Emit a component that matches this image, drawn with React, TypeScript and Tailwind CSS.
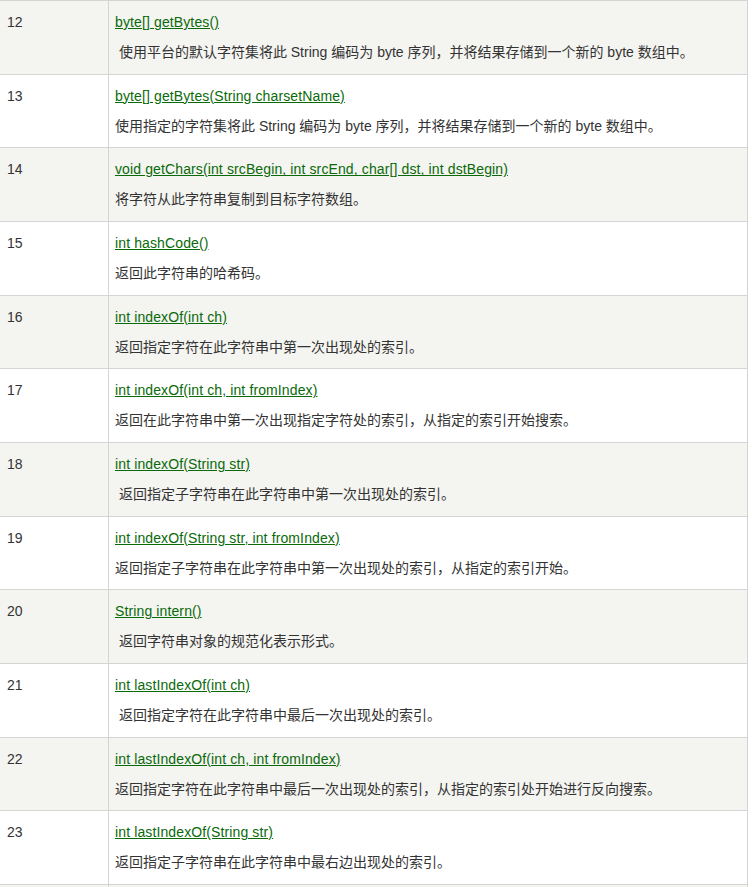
import React from "react";

type Row = { n: number; sig: string; desc: string };

const rows: Row[] = [
  { n: 12, sig: "byte[] getBytes()", desc: "\u00a0使用平台的默认字符集将此 String 编码为 byte 序列，并将结果存储到一个新的 byte 数组中。" },
  { n: 13, sig: "byte[] getBytes(String charsetName)", desc: "使用指定的字符集将此 String 编码为 byte 序列，并将结果存储到一个新的 byte 数组中。" },
  { n: 14, sig: "void getChars(int srcBegin, int srcEnd, char[] dst, int dstBegin)", desc: "将字符从此字符串复制到目标字符数组。" },
  { n: 15, sig: "int hashCode()", desc: "返回此字符串的哈希码。" },
  { n: 16, sig: "int indexOf(int ch)", desc: "返回指定字符在此字符串中第一次出现处的索引。" },
  { n: 17, sig: "int indexOf(int ch, int fromIndex)", desc: "返回在此字符串中第一次出现指定字符处的索引，从指定的索引开始搜索。" },
  { n: 18, sig: "int indexOf(String str)", desc: "\u00a0返回指定子字符串在此字符串中第一次出现处的索引。" },
  { n: 19, sig: "int indexOf(String str, int fromIndex)", desc: "返回指定子字符串在此字符串中第一次出现处的索引，从指定的索引开始。" },
  { n: 20, sig: "String intern()", desc: "\u00a0返回字符串对象的规范化表示形式。" },
  { n: 21, sig: "int lastIndexOf(int ch)", desc: "\u00a0返回指定字符在此字符串中最后一次出现处的索引。" },
  { n: 22, sig: "int lastIndexOf(int ch, int fromIndex)", desc: "返回指定字符在此字符串中最后一次出现处的索引，从指定的索引处开始进行反向搜索。" },
  { n: 23, sig: "int lastIndexOf(String str)", desc: "返回指定子字符串在此字符串中最右边出现处的索引。" },
];

export default function App() {
  return (
    <div
      className="w-[752px] h-[887px] overflow-hidden bg-white text-[14px] text-[#333333]"
      style={{ fontFamily: '"Liberation Sans", Arial, "Noto Sans CJK SC", sans-serif' }}
    >
      <div className="w-[748px] border-t border-r border-[#d4d4d4]">
        {rows.map((r, i) => (
          <div
            key={r.n}
            className={`flex h-[73.67px] border-b border-[#d4d4d4] ${i % 2 === 0 ? "bg-[#f4f4f1]" : "bg-white"}`}
          >
            <div className="w-[109px] shrink-0 border-r border-[#d4d4d4] pl-[7px] pt-[11px] leading-[21px]">
              {r.n}
            </div>
            <div className="flex-1 pl-[6px] pt-[11px]">
              <div className="leading-[21px]">
                <a href="#" className="text-[#0a6a0a] underline tracking-[0.12px]">
                  {r.sig}
                </a>
              </div>
              <div className="mt-[9px] leading-[21px] whitespace-pre">{r.desc}</div>
            </div>
          </div>
        ))}
        <div className="flex h-[40px] bg-[#f4f4f1]">
          <div className="w-[109px] shrink-0 border-r border-[#d4d4d4]" />
          <div className="flex-1" />
        </div>
      </div>
    </div>
  );
}
